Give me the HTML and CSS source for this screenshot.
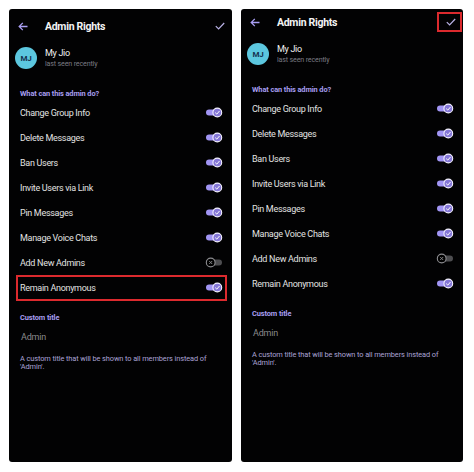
FILE: index.html
```html
<!DOCTYPE html>
<html>
<head>
<meta charset="utf-8">
<link rel="stylesheet" href="styles.css">
</head>
<body>
<div class="page">
  <section class="panel panel-left">
    <div class="topbar">
      <svg class="back" width="10" height="9" viewBox="0 0 10 9"><path d="M9.5 4.5H1.2M4.8 0.9L1.2 4.5L4.8 8.1" fill="none" stroke="#a99ef2" stroke-width="1.3"/></svg>
      <span class="title">Admin Rights</span>
      <span class="done"><svg width="10" height="8" viewBox="0 0 10 8"><path d="M0.8 4.2L3.6 7L9.2 1" fill="none" stroke="#b9b2e6" stroke-width="1.2"/></svg></span>
    </div>
    <div class="user">
      <div class="avatar">MJ</div>
      <div class="user-text">
        <div class="name">My Jio</div>
        <div class="seen">last seen recently</div>
      </div>
    </div>
    <div class="section">What can this admin do?</div>
    <div class="rows">
      <div class="row"><span>Change Group Info</span><svg class="tg" width="18" height="11" viewBox="0 0 18 11"><rect x="1" y="2.5" width="14" height="6" rx="3" fill="#a195f4"/><circle cx="12.3" cy="5.5" r="4.4" fill="#8577d8" stroke="#f4f2ff" stroke-width="1.1"/><path d="M10.2 5.6L11.8 7.1L14.5 4" fill="none" stroke="#fff" stroke-width="1"/></svg></div>
      <div class="row"><span>Delete Messages</span><svg class="tg" width="18" height="11" viewBox="0 0 18 11"><rect x="1" y="2.5" width="14" height="6" rx="3" fill="#a195f4"/><circle cx="12.3" cy="5.5" r="4.4" fill="#8577d8" stroke="#f4f2ff" stroke-width="1.1"/><path d="M10.2 5.6L11.8 7.1L14.5 4" fill="none" stroke="#fff" stroke-width="1"/></svg></div>
      <div class="row"><span>Ban Users</span><svg class="tg" width="18" height="11" viewBox="0 0 18 11"><rect x="1" y="2.5" width="14" height="6" rx="3" fill="#a195f4"/><circle cx="12.3" cy="5.5" r="4.4" fill="#8577d8" stroke="#f4f2ff" stroke-width="1.1"/><path d="M10.2 5.6L11.8 7.1L14.5 4" fill="none" stroke="#fff" stroke-width="1"/></svg></div>
      <div class="row"><span>Invite Users via Link</span><svg class="tg" width="18" height="11" viewBox="0 0 18 11"><rect x="1" y="2.5" width="14" height="6" rx="3" fill="#a195f4"/><circle cx="12.3" cy="5.5" r="4.4" fill="#8577d8" stroke="#f4f2ff" stroke-width="1.1"/><path d="M10.2 5.6L11.8 7.1L14.5 4" fill="none" stroke="#fff" stroke-width="1"/></svg></div>
      <div class="row"><span>Pin Messages</span><svg class="tg" width="18" height="11" viewBox="0 0 18 11"><rect x="1" y="2.5" width="14" height="6" rx="3" fill="#a195f4"/><circle cx="12.3" cy="5.5" r="4.4" fill="#8577d8" stroke="#f4f2ff" stroke-width="1.1"/><path d="M10.2 5.6L11.8 7.1L14.5 4" fill="none" stroke="#fff" stroke-width="1"/></svg></div>
      <div class="row"><span>Manage Voice Chats</span><svg class="tg" width="18" height="11" viewBox="0 0 18 11"><rect x="1" y="2.5" width="14" height="6" rx="3" fill="#a195f4"/><circle cx="12.3" cy="5.5" r="4.4" fill="#8577d8" stroke="#f4f2ff" stroke-width="1.1"/><path d="M10.2 5.6L11.8 7.1L14.5 4" fill="none" stroke="#fff" stroke-width="1"/></svg></div>
      <div class="row"><span>Add New Admins</span><svg class="tg" width="18" height="11" viewBox="0 0 18 11"><rect x="3" y="2.5" width="14" height="6" rx="3" fill="#4d4d50"/><circle cx="5.7" cy="5.5" r="4.4" fill="#000" stroke="#8c8c90" stroke-width="1.1"/><path d="M4.2 4L7.2 7M7.2 4L4.2 7" fill="none" stroke="#8c8c90" stroke-width="0.9"/></svg></div>
      <div class="row row-marked"><span>Remain Anonymous</span><svg class="tg" width="18" height="11" viewBox="0 0 18 11"><rect x="1" y="2.5" width="14" height="6" rx="3" fill="#a195f4"/><circle cx="12.3" cy="5.5" r="4.4" fill="#8577d8" stroke="#f4f2ff" stroke-width="1.1"/><path d="M10.2 5.6L11.8 7.1L14.5 4" fill="none" stroke="#fff" stroke-width="1"/></svg></div>
    </div>
    <div class="section section-custom">Custom title</div>
    <div class="field">Admin</div>
    <p class="hint">A custom title that will be shown to all members instead of 'Admin'.</p>
  </section>

  <section class="panel panel-right">
    <div class="topbar">
      <svg class="back" width="10" height="9" viewBox="0 0 10 9"><path d="M9.5 4.5H1.2M4.8 0.9L1.2 4.5L4.8 8.1" fill="none" stroke="#a99ef2" stroke-width="1.3"/></svg>
      <span class="title">Admin Rights</span>
      <span class="done done-marked"><svg width="10" height="8" viewBox="0 0 10 8"><path d="M0.8 4.2L3.6 7L9.2 1" fill="none" stroke="#b9b2e6" stroke-width="1.2"/></svg></span>
    </div>
    <div class="user">
      <div class="avatar">MJ</div>
      <div class="user-text">
        <div class="name">My Jio</div>
        <div class="seen">last seen recently</div>
      </div>
    </div>
    <div class="section">What can this admin do?</div>
    <div class="rows">
      <div class="row"><span>Change Group Info</span><svg class="tg" width="18" height="11" viewBox="0 0 18 11"><rect x="1" y="2.5" width="14" height="6" rx="3" fill="#a195f4"/><circle cx="12.3" cy="5.5" r="4.4" fill="#8577d8" stroke="#f4f2ff" stroke-width="1.1"/><path d="M10.2 5.6L11.8 7.1L14.5 4" fill="none" stroke="#fff" stroke-width="1"/></svg></div>
      <div class="row"><span>Delete Messages</span><svg class="tg" width="18" height="11" viewBox="0 0 18 11"><rect x="1" y="2.5" width="14" height="6" rx="3" fill="#a195f4"/><circle cx="12.3" cy="5.5" r="4.4" fill="#8577d8" stroke="#f4f2ff" stroke-width="1.1"/><path d="M10.2 5.6L11.8 7.1L14.5 4" fill="none" stroke="#fff" stroke-width="1"/></svg></div>
      <div class="row"><span>Ban Users</span><svg class="tg" width="18" height="11" viewBox="0 0 18 11"><rect x="1" y="2.5" width="14" height="6" rx="3" fill="#a195f4"/><circle cx="12.3" cy="5.5" r="4.4" fill="#8577d8" stroke="#f4f2ff" stroke-width="1.1"/><path d="M10.2 5.6L11.8 7.1L14.5 4" fill="none" stroke="#fff" stroke-width="1"/></svg></div>
      <div class="row"><span>Invite Users via Link</span><svg class="tg" width="18" height="11" viewBox="0 0 18 11"><rect x="1" y="2.5" width="14" height="6" rx="3" fill="#a195f4"/><circle cx="12.3" cy="5.5" r="4.4" fill="#8577d8" stroke="#f4f2ff" stroke-width="1.1"/><path d="M10.2 5.6L11.8 7.1L14.5 4" fill="none" stroke="#fff" stroke-width="1"/></svg></div>
      <div class="row"><span>Pin Messages</span><svg class="tg" width="18" height="11" viewBox="0 0 18 11"><rect x="1" y="2.5" width="14" height="6" rx="3" fill="#a195f4"/><circle cx="12.3" cy="5.5" r="4.4" fill="#8577d8" stroke="#f4f2ff" stroke-width="1.1"/><path d="M10.2 5.6L11.8 7.1L14.5 4" fill="none" stroke="#fff" stroke-width="1"/></svg></div>
      <div class="row"><span>Manage Voice Chats</span><svg class="tg" width="18" height="11" viewBox="0 0 18 11"><rect x="1" y="2.5" width="14" height="6" rx="3" fill="#a195f4"/><circle cx="12.3" cy="5.5" r="4.4" fill="#8577d8" stroke="#f4f2ff" stroke-width="1.1"/><path d="M10.2 5.6L11.8 7.1L14.5 4" fill="none" stroke="#fff" stroke-width="1"/></svg></div>
      <div class="row"><span>Add New Admins</span><svg class="tg" width="18" height="11" viewBox="0 0 18 11"><rect x="3" y="2.5" width="14" height="6" rx="3" fill="#4d4d50"/><circle cx="5.7" cy="5.5" r="4.4" fill="#000" stroke="#8c8c90" stroke-width="1.1"/><path d="M4.2 4L7.2 7M7.2 4L4.2 7" fill="none" stroke="#8c8c90" stroke-width="0.9"/></svg></div>
      <div class="row"><span>Remain Anonymous</span><svg class="tg" width="18" height="11" viewBox="0 0 18 11"><rect x="1" y="2.5" width="14" height="6" rx="3" fill="#a195f4"/><circle cx="12.3" cy="5.5" r="4.4" fill="#8577d8" stroke="#f4f2ff" stroke-width="1.1"/><path d="M10.2 5.6L11.8 7.1L14.5 4" fill="none" stroke="#fff" stroke-width="1"/></svg></div>
    </div>
    <div class="section section-custom">Custom title</div>
    <div class="field">Admin</div>
    <p class="hint">A custom title that will be shown to all members instead of 'Admin'.</p>
  </section>
</div>
</body>
</html>
```

FILE: styles.css
```css
html, body {
  margin: 0;
  padding: 0;
  background: #ffffff;
}

body {
  font-family: Roboto, "Noto Sans", sans-serif;
  width: 474px;
  height: 472px;
  overflow: hidden;
}

.page {
  display: flex;
  gap: 9px;
  padding: 9px 11px 10px 9px;
}

.panel {
  box-sizing: border-box;
  height: 453px;
  background: #020203;
  border-radius: 3px;
  display: flex;
  flex-direction: column;
  padding-top: 4px;
}

.panel-left {
  width: 223px;
  padding-top: 8px;
}

.panel-right {
  width: 222px;
}

.topbar {
  height: 18px;
  display: flex;
  align-items: center;
  padding-left: 9px;
  padding-right: 1px;
}

.back {
  display: block;
  flex: none;
}

.title {
  margin-left: 17px;
  color: #f4f4f4;
  font-size: 10.5px;
  font-weight: 700;
  letter-spacing: -0.3px;
  flex: 1;
}

.done {
  width: 25px;
  height: 20px;
  box-sizing: border-box;
  display: flex;
  align-items: center;
  justify-content: center;
  padding-left: 2px;
}

.done svg {
  display: block;
}

.done-marked {
  box-shadow: inset 0 0 0 2px #dc2a2e;
}

.user {
  display: flex;
  align-items: center;
  margin-top: 12px;
  padding-left: 6px;
}

.avatar {
  width: 22px;
  height: 22px;
  border-radius: 50%;
  background: #5cc7df;
  color: #16324f;
  font-size: 8px;
  font-weight: 700;
  display: flex;
  align-items: center;
  justify-content: center;
  letter-spacing: -0.2px;
}

.user-text {
  margin-left: 8px;
}

.name {
  color: #f0f0f0;
  font-size: 9px;
  line-height: 11px;
  letter-spacing: -0.3px;
}

.seen {
  color: #7a7a82;
  font-size: 7.1px;
  line-height: 10px;
  letter-spacing: -0.15px;
}

.section {
  margin-top: 19px;
  padding-left: 11px;
  color: #a79ef0;
  font-size: 7.4px;
  font-weight: 700;
  line-height: 12px;
  letter-spacing: -0.1px;
}

.rows {
  display: flex;
  flex-direction: column;
}

.row {
  position: relative;
  height: 25px;
  display: flex;
  align-items: center;
  justify-content: space-between;
  padding: 0 9px 0 11px;
  color: #e2e2e2;
  font-size: 9px;
  letter-spacing: -0.3px;
}

.tg {
  display: block;
}

.row-marked::after {
  content: "";
  position: absolute;
  top: 0;
  bottom: -1px;
  left: 7px;
  right: 5px;
  border: 2px solid #dc2a2e;
}

.section-custom {
  margin-top: 12px;
}

.field {
  margin-top: 6px;
  padding-left: 12px;
  color: #8b8b8e;
  font-size: 9px;
  line-height: 14px;
  letter-spacing: -0.2px;
}

.hint {
  margin: 11px 0 0;
  padding: 0 20px 0 11px;
  color: #aaa3d6;
  font-size: 7.4px;
  line-height: 8px;
  letter-spacing: -0.1px;
}
```
